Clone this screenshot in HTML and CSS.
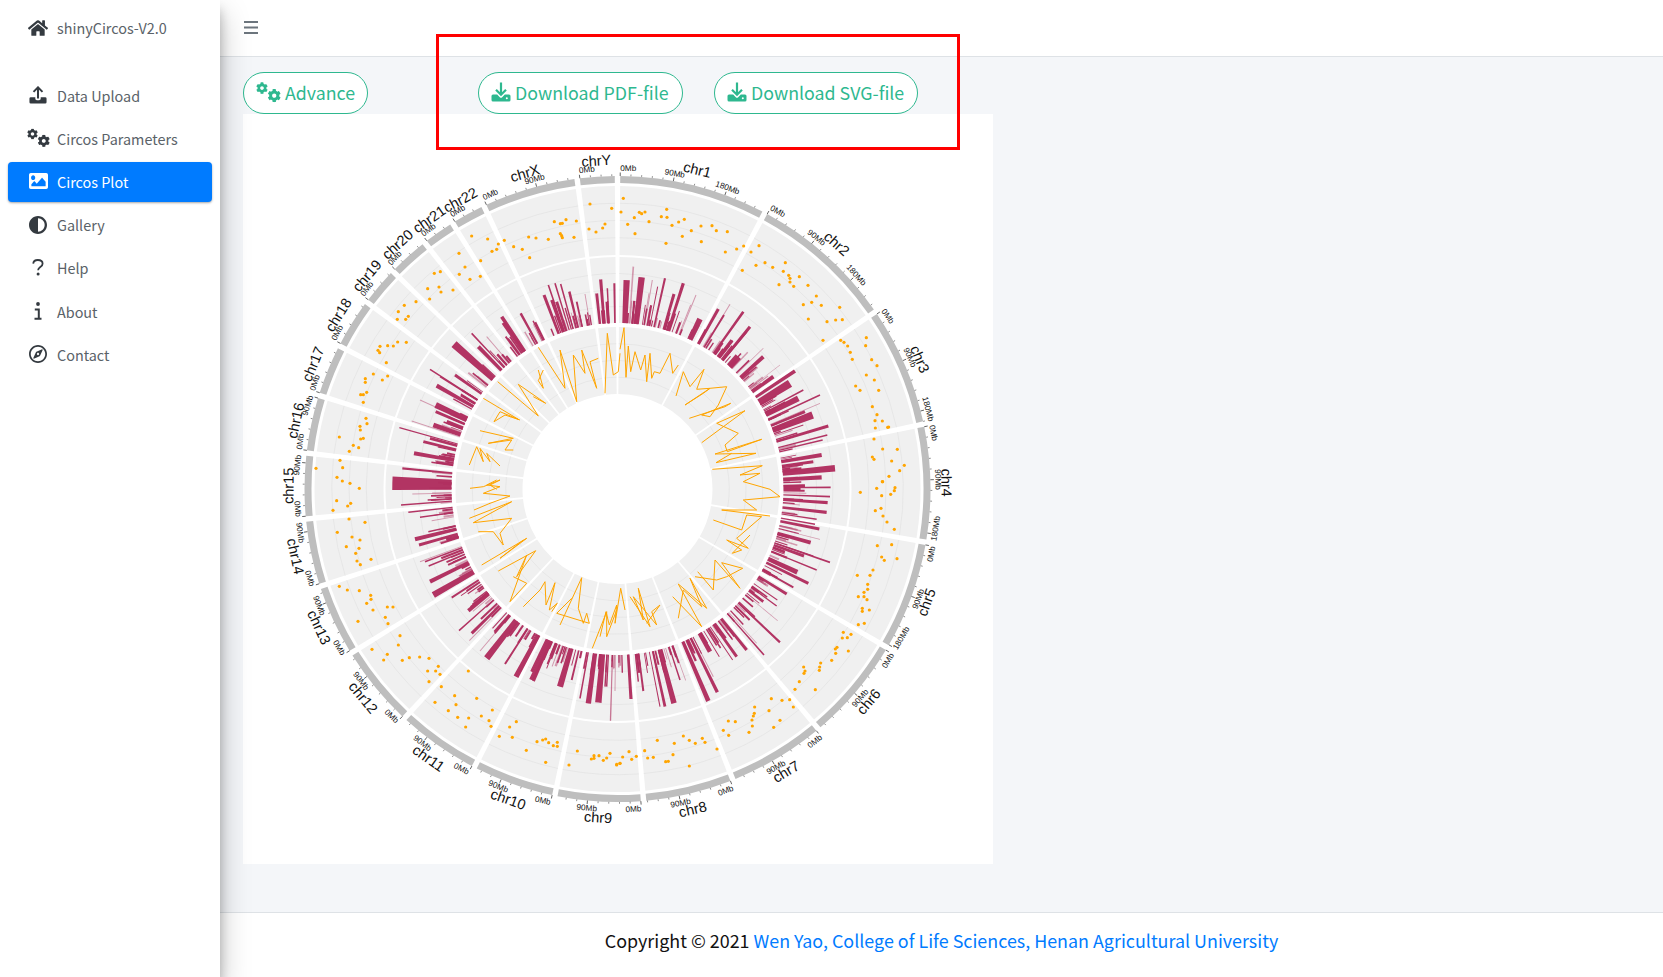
FILE: index.html
```html
<!DOCTYPE html>
<html lang="en">
<head>
    <meta charset="utf-8">
    <title>shinyCircos-V2.0</title>
    <link rel="stylesheet" href="styles.css">
</head>
<body>
    <svg class="icon-defs" width="0" height="0">
        <symbol id="i-cog" viewBox="0 0 512 512"><path d="M487.4 315.7l-42.6-24.6c4.3-23.2 4.3-47 0-70.2l42.6-24.6c4.9-2.8 7.1-8.6 5.5-14-11.1-35.6-30-67.8-54.7-94.6-3.8-4.1-10-5.1-14.8-2.3L380.8 110c-17.9-15.4-38.5-27.3-60.8-35.1V25.8c0-5.6-3.9-10.5-9.4-11.7-36.7-8.2-74.3-7.8-109.2 0-5.5 1.2-9.4 6.1-9.4 11.7V75c-22.2 7.9-42.8 19.8-60.8 35.1L88.7 85.5c-4.9-2.8-11-1.9-14.8 2.3-24.7 26.7-43.6 58.9-54.7 94.6-1.7 5.4.6 11.2 5.5 14L67.3 221c-4.3 23.2-4.3 47 0 70.2l-42.6 24.6c-4.9 2.8-7.1 8.6-5.5 14 11.1 35.6 30 67.8 54.7 94.6 3.8 4.1 10 5.1 14.8 2.3l42.6-24.6c17.9 15.4 38.5 27.3 60.8 35.1v49.2c0 5.6 3.9 10.5 9.4 11.7 36.7 8.2 74.3 7.8 109.2 0 5.5-1.2 9.4-6.1 9.4-11.7v-49.2c22.2-7.9 42.8-19.8 60.8-35.1l42.6 24.6c4.9 2.8 11 1.9 14.8-2.3 24.7-26.7 43.6-58.9 54.7-94.6 1.5-5.5-.7-11.3-5.6-14.1zM256 336c-44.1 0-80-35.9-80-80s35.9-80 80-80 80 35.9 80 80-35.9 80-80 80z"/></symbol>
        <symbol id="i-cogs" viewBox="0 0 24 20"><use href="#i-cog" x="0" y="0" width="11.500" height="11.500"/><use href="#i-cog" x="11" y="6.500" width="13" height="13"/></symbol>
        <symbol id="i-download" viewBox="0 0 20 20"><path d="M2 12.500h4.200l2.600 2.700c.7.7 1.700.7 2.400 0l2.600-2.700H18a1.500 1.500 0 0 1 1.500 1.500v4a1.500 1.500 0 0 1-1.500 1.500H2A1.500 1.500 0 0 1 .5 18v-4A1.500 1.500 0 0 1 2 12.500z"/><path d="M10 .5v12M5 7.800l5 5 5-5" fill="none" stroke="currentColor" stroke-width="2.200"/><circle cx="15.800" cy="16.300" r="1" fill="#fff"/></symbol>
    </svg>

    <aside class="sidebar">
        <div class="brand">
            <span class="icon-slot">
                <svg class="icon" width="20" height="18" viewBox="0 0 576 512"><path d="M280.37 148.26L96 300.11V464a16 16 0 0 0 16 16l112.06-.29a16 16 0 0 0 15.92-16V368a16 16 0 0 1 16-16h64a16 16 0 0 1 16 16v95.64a16 16 0 0 0 16 16.05L464 480a16 16 0 0 0 16-16V300L295.67 148.26a12.19 12.19 0 0 0-15.3 0zM571.6 251.47L488 182.56V44.05a12 12 0 0 0-12-12h-56a12 12 0 0 0-12 12v72.61L318.47 43a48 48 0 0 0-61 0L4.34 251.47a12 12 0 0 0-1.6 16.9l25.5 31A12 12 0 0 0 45.15 301l235.22-193.74a12.19 12.19 0 0 1 15.3 0L530.9 301a12 12 0 0 0 16.9-1.6l25.5-31a12 12 0 0 0-1.7-16.93z"/></svg>
            </span>
            <span>shinyCircos-V2.0</span>
        </div>
        <ul class="nav">
            <li><a class="nav-link" href="#">
                <span class="icon-slot">
                    <svg class="icon" width="18" height="18" viewBox="0 0 20 20"><path d="M2 12.500h5v1.500c0 1 .8 1.800 1.800 1.800h2.400c1 0 1.800-.8 1.800-1.800v-1.500h5a1.500 1.500 0 0 1 1.500 1.500v4a1.500 1.500 0 0 1-1.500 1.500H2A1.500 1.500 0 0 1 .5 18v-4A1.500 1.500 0 0 1 2 12.500z"/><path d="M10 14V1.500M5 6.500l5-5 5 5" fill="none" stroke="currentColor" stroke-width="2.200"/></svg>
                </span>
                <span>Data Upload</span>
            </a></li>
            <li><a class="nav-link" href="#">
                <span class="icon-slot">
                    <svg class="icon" width="23" height="20" viewBox="0 0 24 20"><use href="#i-cogs"/></svg>
                </span>
                <span>Circos Parameters</span>
            </a></li>
            <li><a class="nav-link active" href="#">
                <span class="icon-slot">
                    <svg class="icon icon-image" width="19" height="16" viewBox="0 64 512 384" preserveAspectRatio="none"><path d="M464 448H48c-26.51 0-48-21.49-48-48V112c0-26.51 21.49-48 48-48h416c26.51 0 48 21.49 48 48v288c0 26.51-21.49 48-48 48zM112 120c-30.928 0-56 25.072-56 56s25.072 56 56 56 56-25.072 56-56-25.072-56-56-56zM64 384h384V272l-87.515-87.515c-4.686-4.686-12.284-4.686-16.971 0L208 320l-55.515-55.515c-4.686-4.686-12.284-4.686-16.971 0L64 336v48z"/></svg>
                </span>
                <span>Circos Plot</span>
            </a></li>
            <li><a class="nav-link" href="#">
                <span class="icon-slot">
                    <svg class="icon" width="18" height="18" viewBox="8 8 496 496"><path d="M8 256c0 136.966 111.033 248 248 248s248-111.034 248-248S392.966 8 256 8 8 119.033 8 256zm248 184V72c101.705 0 184 82.311 184 184 0 101.705-82.311 184-184 184z"/></svg>
                </span>
                <span>Gallery</span>
            </a></li>
            <li><a class="nav-link" href="#">
                <span class="icon-slot">
                    <svg class="icon" width="12" height="17" viewBox="0 0 12 17"><path d="M1.200 4.600C1.500 2.200 3.400 1 5.800 1c2.700 0 4.800 1.300 4.800 3.700 0 3.400-4.500 3.300-4.500 6.500" fill="none" stroke="currentColor" stroke-width="1.800"/><circle cx="6.100" cy="15" r="1.500"/></svg>
                </span>
                <span>Help</span>
            </a></li>
            <li><a class="nav-link" href="#">
                <span class="icon-slot">
                    <svg class="icon" width="8" height="18" viewBox="0 0 8 18"><circle cx="4" cy="2" r="1.900"/><path d="M.8 7.500h4v9M.5 16.700h7" fill="none" stroke="currentColor" stroke-width="2"/></svg>
                </span>
                <span>About</span>
            </a></li>
            <li><a class="nav-link" href="#">
                <span class="icon-slot">
                    <svg class="icon" width="18" height="18" viewBox="0 8 496 496"><path d="M347.94 129.86L203.6 195.83a31.938 31.938 0 0 0-15.77 15.77l-65.97 144.34c-7.61 16.65 9.54 33.81 26.2 26.2l144.34-65.97a31.938 31.938 0 0 0 15.77-15.77l65.97-144.34c7.61-16.66-9.54-33.81-26.2-26.2zm-77.36 148.72c-12.47 12.47-32.69 12.47-45.16 0-12.47-12.47-12.47-32.69 0-45.16 12.47-12.47 32.69-12.47 45.16 0 12.47 12.47 12.47 32.69 0 45.16zM248 8C111.03 8 0 119.03 0 256s111.03 248 248 248 248-111.03 248-248S384.97 8 248 8zm0 448c-110.28 0-200-89.72-200-200S137.72 56 248 56s200 89.72 200 200-89.72 200-200 200z"/></svg>
                </span>
                <span>Contact</span>
            </a></li>
        </ul>
    </aside>

    <div class="main">
        <header class="topbar">
            <svg class="menu-icon" width="14" height="14" viewBox="0 0 14 14"><path d="M0 1h14M0 6.500h14M0 12h14" fill="none" stroke="#6c757d" stroke-width="2"/></svg>
        </header>

        <section class="content">
            <div class="toolbar">
                <button class="btn btn-advance" type="button">
                    <svg class="btn-icon" width="25" height="21" viewBox="0 0 24 20"><use href="#i-cogs"/></svg>
                    Advance
                </button>
                <button class="btn btn-pdf" type="button">
                    <svg class="btn-icon" width="20" height="20" viewBox="0 0 20 20"><use href="#i-download"/></svg>
                    Download PDF-file
                </button>
                <button class="btn btn-svg" type="button">
                    <svg class="btn-icon" width="20" height="20" viewBox="0 0 20 20"><use href="#i-download"/></svg>
                    Download SVG-file
                </button>
            </div>
            <div class="plot">
                <svg id="circos" width="750" height="750" viewBox="0 0 750 750"></svg>
            </div>
        </section>

        <footer class="footer">
            <span>Copyright © 2021 <a href="#">Wen Yao, College of Life Sciences, Henan Agricultural University</a></span>
        </footer>
    </div>

    <div class="marker"></div>

    <script src="script.js"></script>
</body>
</html>
```

FILE: styles.css
```css
* {
    box-sizing: border-box;
}

html, body {
    height: 100%;
}

body {
    margin: 0;
    display: flex;
    height: 977px;
    overflow: hidden;
    font-family: "Noto Sans CJK SC", "Noto Sans", sans-serif;
    background-color: #fff;
    color: #111;
}

.icon-defs {
    position: absolute;
}

.sidebar {
    flex: 0 0 220px;
    background-color: #fff;
    box-shadow: 0 14px 28px rgba(0, 0, 0, 0.25), 0 10px 10px rgba(0, 0, 0, 0.22);
    z-index: 2;
    padding: 0 8px;
}

.brand {
    display: flex;
    align-items: center;
    gap: 9px;
    height: 55px;
    padding-left: 20px;
    font-size: 14.4px;
    color: #5a6268;
}

.icon-slot {
    flex: 0 0 20px;
    min-width: 0;
    display: flex;
    justify-content: center;
    align-items: center;
}

.icon {
    flex: none;
    fill: #343a40;
    color: #343a40;
}

.icon-image {
    margin-top: -2px;
}

.nav {
    list-style-type: none;
    margin: 20.2px 0 0;
    padding: 0;
}

.nav li {
    margin-bottom: 3.2px;
}

.nav-link {
    display: flex;
    align-items: center;
    gap: 9px;
    height: 40px;
    padding-left: 20px;
    border-radius: 4px;
    font-size: 14.4px;
    color: #5a6268;
    text-decoration: none;
}

.nav-link.active {
    background-color: #007bff;
    color: #fff;
    box-shadow: 0 1px 3px rgba(0, 0, 0, 0.12), 0 1px 2px rgba(0, 0, 0, 0.24);
}

.nav-link.active .icon {
    fill: #fff;
}

.main {
    flex: 1;
    display: flex;
    flex-direction: column;
    min-width: 0;
}

.topbar {
    flex: 0 0 57px;
    display: flex;
    align-items: center;
    padding-left: 24px;
    padding-bottom: 1px;
    background-color: #fff;
    border-bottom: 1px solid #dee2e6;
}

.content {
    flex: 1;
    padding: 15px 23px;
    background-color: #f4f6f9;
}

.toolbar {
    display: flex;
    height: 42px;
}

.btn {
    display: flex;
    align-items: center;
    gap: 4px;
    height: 42px;
    padding: 0 12px 2px;
    border: 1px solid #2eb88f;
    border-radius: 21px;
    background-color: #fff;
    color: #2eb88f;
    font-family: inherit;
    font-size: 17.8px;
    white-space: nowrap;
}

.btn-icon {
    flex: none;
    fill: #2eb88f;
    color: #2eb88f;
}

.btn-advance {
    width: 125px;
}

.btn-pdf {
    width: 205px;
    margin-left: 110px;
}

.btn-svg {
    width: 204px;
    margin-left: 31px;
}

.plot {
    width: 750px;
    height: 750px;
    background-color: #fff;
}

#circos {
    display: block;
    font-family: "Liberation Sans", Arial, sans-serif;
}

.footer {
    flex: 0 0 65px;
    display: flex;
    justify-content: center;
    align-items: center;
    padding-bottom: 10px;
    background-color: #fff;
    border-top: 1px solid #dee2e6;
    font-size: 17.9px;
}

.footer a {
    color: #007bff;
    text-decoration: none;
}

/* rectangulo rojo encima de los botones */
.marker {
    position: absolute;
    left: 436px;
    top: 34px;
    width: 524px;
    height: 116px;
    border: 3px solid #f00;
    z-index: 3;
}
```

FILE: script.js
```js
const CX = 374.5, CY = 375;
const svg = document.getElementById('circos');
const NS = 'http://www.w3.org/2000/svg';

const GREY = '#bebebe', BG = '#f0f0f0', GRID = '#e2e2e2';
const MAROON = '#b03060', ORANGE = '#ffa500';

const names = ['chr1','chr2','chr3','chr4','chr5','chr6','chr7','chr8','chr9','chr10','chr11','chr12',
    'chr13','chr14','chr15','chr16','chr17','chr18','chr19','chr20','chr21','chr22','chrX','chrY'];
const sizes = [249,243,198,191,181,171,159,146,141,135,135,133,115,107,102,90.3,81,78,59,63,48,51,155,59];
const total = sizes.reduce((a, b) => a + b, 0);
const perMb = 336 / total;

// semilla fija, siempre sale el mismo dibujo
let seed = 20210;
function rnd() {
    seed = (seed + 0x6D2B79F5) | 0;
    let t = Math.imul(seed ^ (seed >>> 15), 1 | seed);
    t = (t + Math.imul(t ^ (t >>> 7), 61 | t)) ^ t;
    return ((t ^ (t >>> 14)) >>> 0) / 4294967296;
}

function pt(a, r) {
    const rad = a * Math.PI / 180;
    return [CX + r * Math.sin(rad), CY - r * Math.cos(rad)];
}

function fmt(p) {
    return p[0].toFixed(2) + ' ' + p[1].toFixed(2);
}

function add(tag, attrs, text) {
    const el = document.createElementNS(NS, tag);
    for (const k in attrs) el.setAttribute(k, attrs[k]);
    if (text) el.textContent = text;
    svg.appendChild(el);
    return el;
}

function ring(a0, a1, r0, r1) {
    const big = a1 - a0 > 180 ? 1 : 0;
    return 'M' + fmt(pt(a0, r1)) + 'A' + r1 + ' ' + r1 + ' 0 ' + big + ' 1 ' + fmt(pt(a1, r1)) +
        'L' + fmt(pt(a1, r0)) + 'A' + r0 + ' ' + r0 + ' 0 ' + big + ' 0 ' + fmt(pt(a0, r0)) + 'Z';
}

function arc(a0, a1, r) {
    return 'M' + fmt(pt(a0, r)) + 'A' + r + ' ' + r + ' 0 0 1 ' + fmt(pt(a1, r));
}

function flipped(a) {
    return a > 90 && a < 270;
}

function label(a, r, text, size, anchor) {
    const p = pt(a, r);
    const rot = flipped(a) ? a - 180 : a;
    add('text', {
        x: p[0], y: p[1], 'font-size': size, 'text-anchor': anchor, 'dominant-baseline': 'central',
        fill: '#111', transform: 'rotate(' + rot.toFixed(2) + ' ' + p[0].toFixed(2) + ' ' + p[1].toFixed(2) + ')'
    }, text);
}

const sectors = [];
let cur = 0.5;
sizes.forEach(function(size, i) {
    sectors.push({ name: names[i], size: size, a0: cur, a1: cur + size * perMb });
    cur += size * perMb + 1;
});

// fondos, rejilla, banda gris, marcas y nombres
sectors.forEach(function(s) {
    add('path', { d: ring(s.a0, s.a1, 306, 313), fill: GREY });
    [[234, 303], [166, 232], [95, 162]].forEach(function(t) {
        add('path', { d: ring(s.a0, s.a1, t[0], t[1]), fill: BG });
        for (let f = 1; f <= 3; f++) {
            add('path', { d: arc(s.a0, s.a1, t[0] + (t[1] - t[0]) * f / 4), fill: 'none', stroke: GRID, 'stroke-width': 0.7 });
        }
    });
    for (let mb = 0; mb <= s.size; mb += 18) {
        const a = s.a0 + mb * perMb;
        const major = mb % 90 === 0;
        const a0 = pt(a, 313), a1 = pt(a, major ? 316.5 : 314.8);
        add('path', { d: 'M' + fmt(a0) + 'L' + fmt(a1), stroke: '#222', 'stroke-width': major ? 0.7 : 0.5 });
        if (major) {
            let anchor = 'middle';
            let at = a;
            if (mb === 0) {
                anchor = flipped(a) ? 'end' : 'start';
            } else if (s.a1 - a < 1.5) {
                // cerca del final: el texto termina donde acaba el cromosoma
                at = s.a1;
                anchor = flipped(a) ? 'start' : 'end';
            }
            label(at, 320.5, mb + 'Mb', 8.2, anchor);
        }
    }
    label((s.a0 + s.a1) / 2, 329, s.name, 14.5, 'middle');
});

// puntos leidos de la imagen: [origen x, origen y, x, y, x, y...] a escala 3
const dots = [
    [270, 140, [960,192,1025,205,957,267,978,276,998,264,1005,252,853,245,871,251,877,250,888,239,919,243,871,281,875,287,877,293,912,292,835,298,798,294,776,291,703,301,685,312,680,328,666,334,653,297,731,320,757,328,779,353,605,288,632,362,631,409,600,418,585,381,568,403,567,340,511,395,493,400,473,446,507,441,513,456,549,450,479,477,438,485,403,496,385,515,415,529,407,538,382,538,409,607,383,606,370,618,353,617,330,619,324,631,329,638,349,668,353,708,337,720,310,702,286,716,286,727,290,757,280,764,272,764,280,787,288,835,270,859,291,851,271,870,272,897,280,895,208,891,250,916,266,923,238,934,138,985,210,961,218,983,201,1012,217,1023,240,1030,268,1045]],
    [600, 140, [70,175,63,216,118,217,125,221,135,216,103,233,83,253,105,281,147,245,184,230,200,208,201,232,216,256,236,246,253,238,247,289,274,272,303,258,336,257,349,272,382,275,304,305,198,310,376,336,410,327,431,318,453,336,477,317,427,391,468,376,495,368,518,382,556,368,550,394,566,406,570,415,598,410,570,426,581,439,537,434,624,436,649,468,635,487,610,494,664,496,719,502,625,537,681,545,707,540,727,539,669,601,722,601,732,607,743,618,751,637,757,658,799,593,797,617,815,659,831,677,799,705,823,720,767,738,780,751,836,751,817,800,831,824,825,842,847,843,826,864,863,862,866,861,822,897,848,927,892,928,817,951,822,958,875,963,913,976,899,992,867,1009,847,1025,830,1045,885,1043]],
    [600, 480, [848,5,883,32,872,43,845,47,781,37,826,92,843,85,849,108,861,126,883,148,832,197,875,194,845,231,853,241,891,236,819,270,772,286,810,286,803,313,803,328,792,337,775,350,792,350,801,359,787,385,787,394,808,390,775,434,793,430,730,457,753,463,727,474,742,473,711,502,706,507,707,520,745,513,695,541,662,549,659,561,658,571,611,561,615,573,612,580,598,605,585,628,646,629,514,656,546,661,569,659,580,681,464,681,463,700,460,708,507,692,456,720,457,738,540,721,521,742,447,757,385,723,406,725,370,751,386,766,351,807,250,768,307,775,268,781,315,787,286,790,223,790,172,781,134,812,143,834,160,832,219,824,205,844,197,845,268,858,109,829,95,838,87,815,68,831,60,850,50,855,30,820,20,834,10,841]],
    [270, 480, [1050,850,1040,853,987,827,972,827,964,837,972,835,922,813,897,855,827,847,862,787,862,799,850,797,836,788,827,777,818,780,801,785,769,811,739,725,719,741,727,772,688,769,595,573,620,655,554,647,558,674,535,692,495,667,563,712,596,714,634,708,657,722,663,739,667,690,587,741,514,620,477,605,510,583,497,573,473,573,505,559,477,535,449,531,397,541,418,533,352,523,341,540,306,508,385,495,390,467,354,431,346,412,352,381,369,381,309,390,290,370,303,358,302,346,268,332,232,330,208,319,264,424,303,238,271,254,261,243,257,220,267,205,270,180,246,171,229,200,202,157,285,127,237,117,189,91,233,78,242,70,200,62]]
];

// barras leidas de la imagen: x, y de la punta y ancho (negativo = claro)
const bars = [
    [270, 140, [980,460,3,992,418,3,1012,445,1.5,1033,430,2,945,462,-1,835,435,1.5,855,430,1.5,872,432,1.5,898,455,2.5,920,485,2,822,465,3,845,480,3,860,485,3,752,520,2.5,790,553,-1,802,575,-0.7,695,530,3.500,700,548,4,707,590,2,720,590,2,650,590,-1,605,580,1.5,625,620,4,552,612,7,555,705,3,480,688,1.5,500,737,4,510,710,1.5,497,795,6,497,815,3,450,780,-1,490,855,5,530,845,4,425,843,-1,460,905,3,480,895,3,388,863,1.2,432,940,4,397,985,2,367,1030,12]],
    [600, 140, [100,380,-1.5,80,420,6,125,412,6,157,420,-1,147,460,-1,195,415,2,173,440,1,222,462,3,250,430,3,288,465,-1,272,495,-1,300,537,6,355,507,3,390,493,-1,430,515,2.5,372,525,2,450,560,3,440,575,2,395,600,3,415,650,8,490,625,-0.7,490,650,4,540,675,-0.5,585,693,3.5,520,710,4,570,730,8,595,775,6,610,750,1.5,660,765,1.5,660,790,-0.8,638,825,7,615,815,3,685,858,3,610,855,1,682,885,1.5,668,900,1.5,665,945,4,705,985,6,665,1012,4,640,965,3]],
    [600, 480, [615,17,3,692,22,1.5,690,50,1.5,683,68,3,680,97,3,650,118,1.5,658,147,3,645,133,1.5,632,188,4,660,178,-0.8,690,247,1.5,640,228,1,612,228,3,650,270,1.5,592,277,5,625,310,3,580,322,2,560,342,3,532,360,1,530,378,1.5,490,365,3,540,487,2,533,422,-0.7,492,525,1.5,470,490,-0.7,440,510,3,410,530,3,398,540,1,352,637,3,325,663,4,330,515,5,358,530,1,340,590,-1,257,601,-0.8,240,600,1.5,222,670,5,195,680,2.5,180,680,1,130,633,2,115,605,1.5,93,657,3,67,578,1.5,45,633,-1,32,722,-1,15,620,1.5]],
    [270, 480, [427,42,-1,473,60,1.5,393,75,1.5,415,97,1.5,450,112,1.5,485,122,-1,435,178,4,447,195,3,475,155,1.5,465,245,1.5,450,245,-1,476,258,1.5,480,305,4,490,345,6,545,353,2,573,347,1,595,392,4,567,452,1.5,605,460,3,598,482,-1,630,513,-1,650,535,6,705,552,2,738,590,5,785,575,3,785,600,5,790,603,3,830,565,1,870,620,6,905,600,2,930,655,1.5,955,670,5,985,668,6,1021,722,-1,1010,620,1.5]]
];

// linea naranja, leida tramo a tramo de la imagen
const lines = [
    [600, 140, [60,628,72,563,78,712,85,618,92,695,105,635,122,690,135,645,140,725,150,640,155,715,163,695,180,700,210,640,218,700,235,675]],
    [600, 140, [228,768,250,695,270,740,312,688,290,748,330,745,310,760,255,795,330,745,380,740,355,795,330,830,305,825,392,790,375,800,268,835]],
    [600, 140, [305,908,435,812,350,850,415,880,375,915,382,935,485,898,345,942,468,940,348,968,395,940]],
    [600, 140, [337,988,487,977,420,1005,480,1000,430,1025,510,1048,540,1070,430,1080,470,1110,365,1110,510,1128]],
    [600, 480, [340,120,425,150,440,105,485,110,410,175,445,205,380,180,425,210,397,220,450,165]],
    [600, 480, [293,275,340,330,345,240,420,325,365,248,428,265,380,290,350,300,285,290]],
    [600, 480, [218,350,305,440,235,312,320,385,270,295,305,380,250,330,235,415]],
    [600, 480, [90,350,150,440,115,325,130,420,100,350,170,435,155,395,180,375,140,430]],
    [600, 480, [0,470,18,395,28,435,50,375,45,430,62,325,75,390]],
    [270, 480, [967,505,1010,395,1010,470,1040,390]],
    [270, 480, [870,435,935,293,925,385,940,430,950,400,958,430,860,400,905,355]],
    [270, 480, [760,380,810,330,825,305,828,375,855,308,838,390,862,370,845,395]],
    [270, 480, [685,273,797,212,740,290,770,225,720,365,770,310,730,290]],
    [270, 480, [635,255,770,175,690,235,760,180]],
    [270, 480, [625,155,670,155,700,195,690,160,725,115,610,128,725,65,598,115]],
    [270, 480, [612,90,660,70,720,48,640,40,690,20,650,15,680,0]],
    [270, 140, [600,1045,640,1040,690,1020,660,1035,680,1048]],
    [270, 140, [598,975,620,920,640,965,630,925,660,965,650,940,690,978]],
    [270, 140, [630,872,730,895,655,910,725,900,705,930,730,930]],
    [270, 140, [640,775,745,838,690,815,672,845,705,825,750,840]],
    [270, 140, [683,725,805,828,745,733,827,790,790,770]],
    [270, 140, [805,690,820,745,805,722,820,690]],
    [270, 140, [805,622,885,745,870,630,920,785,910,645,945,700,935,630,980,745,960,665,985,655]],
    [270, 140, [1005,760,1012,580,1030,705,1045,695,1050,640]]
];

function bar(a, halfW, r, light) {
    add('path', { d: ring(a - halfW, a + halfW, 166, r), fill: MAROON, 'fill-opacity': light ? 0.45 : 0.98 });
}

// relleno cerca de la base para que cada cromosoma quede denso
sectors.forEach(function(s) {
    const n = Math.round(s.size / 8);
    for (let i = 0; i < n; i++) {
        const a = s.a0 + 0.4 + rnd() * (s.a1 - s.a0 - 0.8);
        bar(a, 0.12 + rnd() * 0.25, 172 + rnd() * 18, rnd() < 0.3);
    }
});

bars.forEach(function(group) {
    const d = group[2];
    for (let i = 0; i < d.length; i += 3) {
        const dx = d[i] / 3 + group[0] - 243 - CX;
        const dy = d[i + 1] / 3 + group[1] - 114 - CY;
        const a = Math.atan2(dx, -dy) * 180 / Math.PI;
        const w = Math.abs(d[i + 2]);
        bar(a, (w / 2) / 200 * 180 / Math.PI, Math.hypot(dx, dy), d[i + 2] < 0);
    }
});

lines.forEach(function(group) {
    const d = group[2];
    let line = '';
    for (let i = 0; i < d.length; i += 2) {
        line += (i ? 'L' : 'M') + (d[i] / 3 + group[0] - 243).toFixed(1) + ' ' + (d[i + 1] / 3 + group[1] - 114).toFixed(1);
    }
    add('path', { d: line, fill: 'none', stroke: ORANGE, 'stroke-width': 1, 'stroke-linejoin': 'round' });
});

dots.forEach(function(group) {
    const d = group[2];
    for (let i = 0; i < d.length; i += 2) {
        add('circle', { cx: d[i] / 3 + group[0] - 243, cy: d[i + 1] / 3 + group[1] - 114, r: 1.6, fill: ORANGE });
    }
});
```
